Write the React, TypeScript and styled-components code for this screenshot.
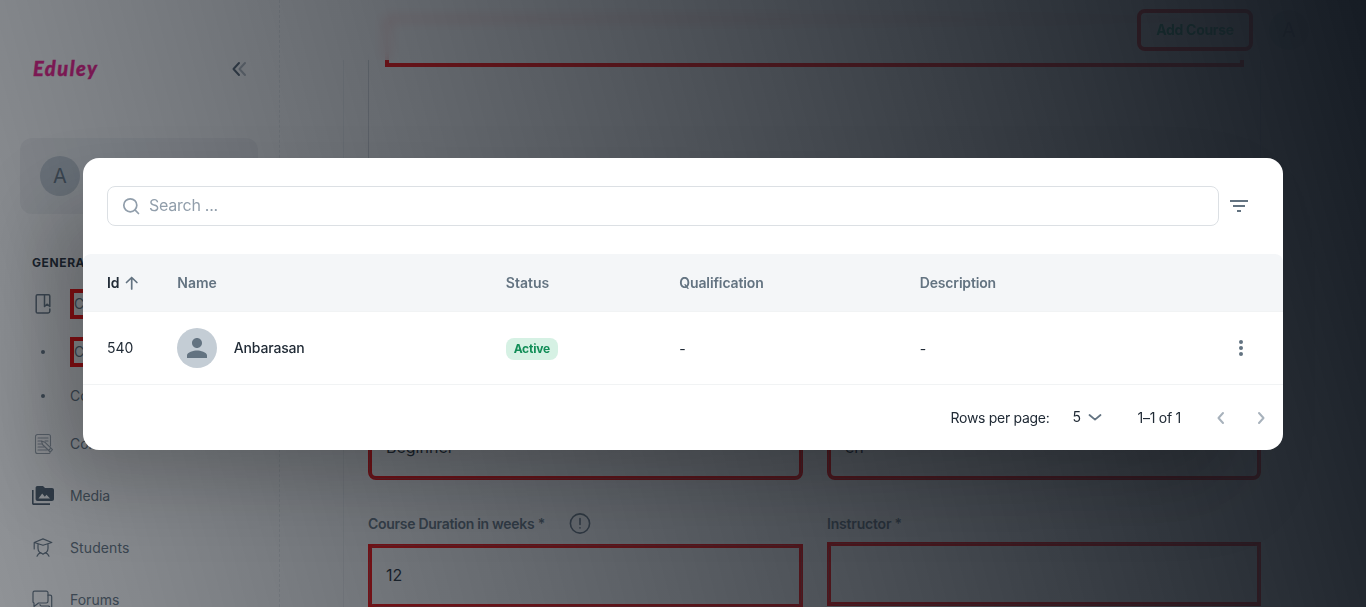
import React from 'react';
import styled, { createGlobalStyle } from 'styled-components';

const GlobalStyle = createGlobalStyle`
  *, *::before, *::after { box-sizing: border-box; }
  html, body { margin: 0; height: 100%; overflow: hidden; background: #fff; }
  body { font-family: Inter, "Liberation Sans", sans-serif; font-size: 14px; color: #212b36; }
`;

const Page = styled.div`
  display: flex;
  height: 607px;
  overflow: hidden;
`;

/* ---------- Sidebar ---------- */

const Sidebar = styled.aside`
  flex: 0 0 280px;
  display: flex;
  flex-direction: column;
  border-right: 1px dashed rgba(145, 158, 171, 0.2);
  > * { flex-shrink: 0; }
`;

const Brand = styled.div`
  display: flex;
  align-items: center;
  justify-content: space-between;
  height: 138px;
  padding: 0 32px 0 33px;
`;

const Logo = styled.span`
  padding-bottom: 2px;
  font: italic 900 20px/24px Lato, sans-serif;
  letter-spacing: 1.5px;
  color: #f4148c;
  -webkit-text-stroke: 0.4px #f4148c;
`;

const Account = styled.div`
  display: flex;
  align-items: center;
  height: 76px;
  margin: 0 21px 0 20px;
  padding: 0 20px;
  border-radius: 12px;
  background: rgba(145, 158, 171, 0.12);
`;

const Avatar = styled.div`
  display: flex;
  flex: none;
  align-items: center;
  justify-content: center;
  width: 40px;
  height: 40px;
  border-radius: 50%;
  background: #c4cdd5;
  color: #637381;
  font-size: 20px;
`;

const Nav = styled.nav`
  display: flex;
  flex-direction: column;
  gap: 4px;
  padding: 0 16px;
`;

const NavHeading = styled.div`
  height: 66px;
  padding: 42px 32px 0;
  font-size: 12px;
  line-height: 14px;
  font-weight: 700;
  letter-spacing: 0.6px;
`;

const NavItem = styled.div<{ $sub?: boolean }>`
  display: flex;
  align-items: center;
  height: ${(p) => (p.$sub ? 40 : 48)}px;
  padding-left: 15px;
  color: #637381;
`;

const NavIcon = styled.span<{ $faded?: boolean }>`
  display: flex;
  flex: 0 0 39px;
  opacity: ${(p) => (p.$faded ? 0.65 : 1)};
`;

const Dot = styled.i`
  width: 4px;
  height: 4px;
  margin-left: 10px;
  border-radius: 50%;
  background: #637381;
`;

const NavLabel = styled.span<{ $marked?: boolean; $ls?: number }>`
  display: flex;
  align-items: center;
  height: 30px;
  padding-bottom: 2px;
  letter-spacing: ${(p) => p.$ls ?? 0}px;
  ${(p) => p.$marked && 'border: 4px solid #f00; padding-right: 4px;'}
`;

/* ---------- Main area ---------- */

const Main = styled.main`
  flex: 1;
  display: flex;
  flex-direction: column;
  margin: -10px 0 0 63px;
  padding-left: 24px;
  border-left: 1px solid rgba(145, 158, 171, 0.14);
  > * { flex-shrink: 0; }
`;

const Header = styled.header`
  position: fixed;
  top: 0;
  left: 280px;
  right: 0;
  display: flex;
  align-items: center;
  justify-content: flex-end;
  gap: 16px;
  height: 60px;
  padding-right: 57px;
  background: rgba(255, 255, 255, 0.8);
  backdrop-filter: blur(6px);
`;

const AddButton = styled.button`
  width: 116px;
  height: 42px;
  padding: 0;
  border: 4px solid #f00;
  border-radius: 8px;
  background: transparent;
  color: #00a76f;
  font: 700 14px/24px Inter, sans-serif;
  letter-spacing: -0.3px;
`;

const Editor = styled.section`
  width: 893px;
  height: 390px;
  padding: 26px 16px 0;
  border: 1px solid rgba(145, 158, 171, 0.4);
`;

const EditorField = styled.div`
  height: 50px;
  border: 4px solid #f00;
`;

const FormGrid = styled.div`
  display: grid;
  grid-template-columns: 435px 434px;
  column-gap: 24px;
  margin-top: 36px;
`;

const Column = styled.div`
  display: flex;
  flex-direction: column;
`;

const Field = styled.div<{ $round?: boolean }>`
  display: flex;
  align-items: stretch;
  height: 64px;
  border: 4px solid #f00;
  border-radius: ${(p) => (p.$round ? 8 : 0)}px;
  font-size: 16px;
`;

const FieldInner = styled.div`
  flex: 1;
  display: flex;
  align-items: center;
  margin: -3px;
  padding: 0 16px 2px;
  border: 1px solid rgba(99, 115, 129, 0.35);
  border-radius: 8px;
`;

const FieldLabel = styled.div<{ $ls: number; $after: number }>`
  display: flex;
  align-items: center;
  gap: 23px;
  height: 24px;
  margin: 31px 0 ${(p) => p.$after}px;
  font-weight: 600;
  color: #637381;
  letter-spacing: ${(p) => p.$ls}px;
`;

/* ---------- Dialog ---------- */

const Backdrop = styled.div`
  position: fixed;
  inset: 0;
  display: flex;
  justify-content: center;
  align-items: flex-start;
  padding-top: 158px;
  background: linear-gradient(75deg, rgba(22, 28, 36, 0.48) 0%, rgb(22, 28, 36) 100%);
`;

const Dialog = styled.div`
  width: 1200px;
  height: 292px;
  overflow: hidden;
  border-radius: 16px;
  background: #fff;
  box-shadow: -40px 40px 80px -8px rgba(0, 0, 0, 0.24);
`;

const Toolbar = styled.div`
  display: flex;
  align-items: center;
  gap: 8px;
  height: 96px;
  padding: 0 32px 0 24px;
`;

const SearchBox = styled.div`
  flex: 1;
  display: flex;
  align-items: center;
  gap: 8px;
  height: 40px;
  padding-left: 13px;
  border: 1px solid #dce0e4;
  border-radius: 8px;
  color: #919eab;
  font-size: 16px;
  letter-spacing: -0.25px;
`;

const Placeholder = styled.span`
  padding-bottom: 2px;
`;

const Row = styled.div<{ $head?: boolean }>`
  display: grid;
  grid-template-columns: 70.3px 328.5px 173.5px 240.5px 1fr 24px;
  align-items: center;
  height: ${(p) => (p.$head ? 58 : 73)}px;
  padding: 0 30px 0 24px;
  border-bottom: 1px solid #f1f3f4;
  ${(p) => p.$head && 'background: #f4f6f8; border-radius: 8px 8px 0 0; color: #637381; font-weight: 600;'}
`;

const Cell = styled.div<{ $ls?: number; $strong?: boolean }>`
  display: flex;
  align-items: center;
  letter-spacing: ${(p) => p.$ls ?? 0}px;
  ${(p) => p.$strong && 'color: #212b36;'}
`;

const Value = styled.span`
  padding-bottom: 1px;
`;

const UserName = styled.span`
  margin-left: 16.5px;
  padding-bottom: 1px;
  font-weight: 500;
  letter-spacing: -0.17px;
`;

const Badge = styled.span`
  display: flex;
  align-items: center;
  justify-content: center;
  width: 52px;
  height: 22px;
  margin-top: 2px;
  padding-bottom: 1px;
  border-radius: 8px;
  background: #d6f1e4;
  color: #118d57;
  font-size: 12px;
  font-weight: 700;
  letter-spacing: -0.2px;
`;

const Footer = styled.div`
  display: flex;
  align-items: center;
  justify-content: flex-end;
  height: 65px;
  padding-right: 14px;
`;

const FooterText = styled.span<{ $mr: number; $ls?: number; $up?: number }>`
  margin-right: ${(p) => p.$mr}px;
  padding-bottom: ${(p) => p.$up ?? 0}px;
  letter-spacing: ${(p) => p.$ls ?? 0}px;
`;

const FooterIcon = styled.span<{ $mr: number }>`
  display: flex;
  margin-right: ${(p) => p.$mr}px;
`;

/* ---------- Icons ---------- */

type StrokeProps = { size?: number; width?: number; color?: string; children: React.ReactNode };

const Stroke = ({ size = 24, width = 1.5, color = 'currentColor', children }: StrokeProps) => (
  <svg width={size} height={size} viewBox={`0 0 ${size} ${size}`} fill="none" stroke={color}
    strokeWidth={width} strokeLinecap="round" strokeLinejoin="round">
    {children}
  </svg>
);

const CourseIcon = () => (
  <Stroke width={1.5}>
    <path d="M18.800 17v2.300q0 1.700-1.700 1.700H6.500q-1.300 0-1.300-1.300V4q0-1.300 1.300-1.300h11q1.300 0 1.300 1.300v10.500l-2.500-2.300-2.800 2.300V2.700" />
  </Stroke>
);

const ContentIcon = () => (
  <Stroke width={1.1}>
    <path d="M19.500 14V4.500a2 2 0 0 0-2-2h-11a2 2 0 0 0-2 2v15a2 2 0 0 0 2 2h11a2 2 0 0 0 1.500-.7M7 6h10M7 9h3M14 9h3M7 12h4M7 15h6M7 18h9" />
    <path d="m10.500 9 1 3.500 7.700 7.500 2.300-2.300-7.700-7.500zM17.500 18.500l2.300-2.300" />
  </Stroke>
);

const MediaIcon = () => (
  <svg width="24" height="24" viewBox="0 0 24 24">
    <path fill="#4a5a69" d="M2.600 6H1v13.200C1 20.300 1.700 21 2.800 21H19v-1.800H2.600zM21 4h-7l-2-2H6.500C5.200 2 4.600 2.800 4.600 4v11c0 1.200.8 2 2 2H21c1.200 0 2-.8 2-2V6c0-1.200-.8-2-2-2zM7.500 14.500l3.700-5 2.600 3.300 1.700-2 3.500 3.700z" />
  </svg>
);

const StudentIcon = () => (
  <Stroke width={1.2}>
    <path d="m3.200 6.500 8.800-3.600 8.800 3.600-8.800 2.800zM3.200 6.500V13M7 8.300v4a5 5.500 0 0 0 10 0v-4M6 20.200q1-2.700 3.800-3.500l2.200 1.500 2.200-1.500q2.800.8 3.800 3.500" />
  </Stroke>
);

const ForumIcon = () => (
  <Stroke width={1.2}>
    <path d="M3.500 3.200h11.800a1.700 1.700 0 0 1 1.700 1.700v8.400a1.700 1.700 0 0 1-1.700 1.700H7.500L3 18.500V15a1.500 1.500 0 0 1-1-1.500V4.700a1.500 1.500 0 0 1 1.500-1.500z" />
    <path d="M17 7.200h2.200a1.500 1.500 0 0 1 1.500 1.500V21l-3-3H10.500A1.500 1.500 0 0 1 9 16.500" />
  </Stroke>
);

const CollapseIcon = () => (
  <Stroke size={16} width={2}>
    <path d="M8 2 2.500 8 8 14" stroke="#4f5f6e" />
    <path d="M14 2 8.500 8l5.500 6" stroke="#637381" opacity="0.5" />
  </Stroke>
);

const InfoIcon = () => (
  <Stroke size={24} width={1.6}>
    <circle cx="12" cy="12.500" r="9.600" />
    <path d="M12 7.500v6M12 16.800v.2" />
  </Stroke>
);

const nav = [
  { label: 'Core', icon: <CourseIcon />, marked: true },
  { label: 'Core', sub: true, marked: true },
  { label: 'Core', sub: true },
  { label: 'Core', icon: <ContentIcon />, faded: true },
  { label: 'Media', icon: <MediaIcon />, ls: -0.1 },
  { label: 'Students', icon: <StudentIcon />, ls: 0.1 },
  { label: 'Forums', icon: <ForumIcon /> },
];

export default function App() {
  return (
    <>
      <GlobalStyle />
      <Page>
        <Sidebar>
          <Brand>
            <Logo>Eduley</Logo>
            <CollapseIcon />
          </Brand>
          <Account>
            <Avatar>A</Avatar>
          </Account>
          <NavHeading>GENERAL</NavHeading>
          <Nav>
            {nav.map((item, i) => (
              <NavItem key={i} $sub={item.sub}>
                <NavIcon $faded={item.faded}>{item.sub ? <Dot /> : item.icon}</NavIcon>
                <NavLabel $marked={item.marked} $ls={item.ls}>{item.label}</NavLabel>
              </NavItem>
            ))}
          </Nav>
        </Sidebar>

        <Main>
          <Editor>
            <EditorField />
          </Editor>
          <FormGrid>
            <Column>
              <Field $round><FieldInner>Beginner</FieldInner></Field>
              <FieldLabel $ls={-0.29} $after={9}>Course Duration in weeks * <InfoIcon /></FieldLabel>
              <Field><FieldInner>12</FieldInner></Field>
            </Column>
            <Column>
              <Field $round><FieldInner>en</FieldInner></Field>
              <FieldLabel $ls={-0.2} $after={7}>Instructor *</FieldLabel>
              <Field><FieldInner /></Field>
            </Column>
          </FormGrid>
        </Main>
        <Header>
          <AddButton>Add Course</AddButton>
          <Avatar>A</Avatar>
        </Header>
      </Page>

      <Backdrop>
        <Dialog>
          <Toolbar>
            <SearchBox>
              <Stroke size={20} width={1.7}>
                <circle cx="9.300" cy="9.300" r="6.500" />
                <path d="m14.200 14.200 3.300 3.300" />
              </Stroke>
              <Placeholder>Search ...</Placeholder>
            </SearchBox>
            <svg width="24" height="24" viewBox="0 0 24 24" fill="#637381">
              <path d="M10 18h4v-2h-4zM3 6v2h18V6zm3 7h12v-2H6z" />
            </svg>
          </Toolbar>
          <Row $head>
            <Cell $strong $ls={-0.2}>
              Id&nbsp;
              <Stroke size={18} width={1.7} color="#637381"><path d="M8.700 15V3.500M3.500 8.500l5.200-5 5.200 5" /></Stroke>
            </Cell>
            <Cell>Name</Cell>
            <Cell>Status</Cell>
            <Cell $ls={-0.12}>Qualification</Cell>
            <Cell $ls={-0.17}>Description</Cell>
          </Row>
          <Row>
            <Cell><Value>540</Value></Cell>
            <Cell>
              <Avatar>
                <svg width="30" height="30" viewBox="0 0 24 24" fill="#637381">
                  <path d="M12 12c2.210 0 4-1.790 4-4s-1.790-4-4-4-4 1.790-4 4 1.790 4 4 4zm0 2c-2.670 0-8 1.340-8 4v2h16v-2c0-2.660-5.330-4-8-4z" />
                </svg>
              </Avatar>
              <UserName>Anbarasan</UserName>
            </Cell>
            <Cell><Badge>Active</Badge></Cell>
            <Cell>-</Cell>
            <Cell>-</Cell>
            <svg width="24" height="24" viewBox="0 0 24 24" fill="#637381">
              <circle cx="12" cy="6" r="2" /><circle cx="12" cy="12" r="2" /><circle cx="12" cy="18" r="2" />
            </svg>
          </Row>
          <Footer>
            <FooterText $mr={23} $ls={-0.3}>Rows per page:</FooterText>
            <FooterText $mr={6} $up={2}>5</FooterText>
            <FooterIcon $mr={34.5}>
              <Stroke size={16} width={1.8} color="#637381"><path d="m2.500 5 5.500 4.600L13.500 5" /></Stroke>
            </FooterIcon>
            <FooterText $mr={32} $ls={-0.25}>1–1 of 1</FooterText>
            <FooterIcon $mr={24}>
              <Stroke size={16} width={2} color="#a8b2bc"><path d="M10 3 5.500 8l4.500 5" /></Stroke>
            </FooterIcon>
            <FooterIcon $mr={0}>
              <Stroke size={16} width={2} color="#a8b2bc"><path d="m6 3 4.500 5L6 13" /></Stroke>
            </FooterIcon>
          </Footer>
        </Dialog>
      </Backdrop>
    </>
  );
}
